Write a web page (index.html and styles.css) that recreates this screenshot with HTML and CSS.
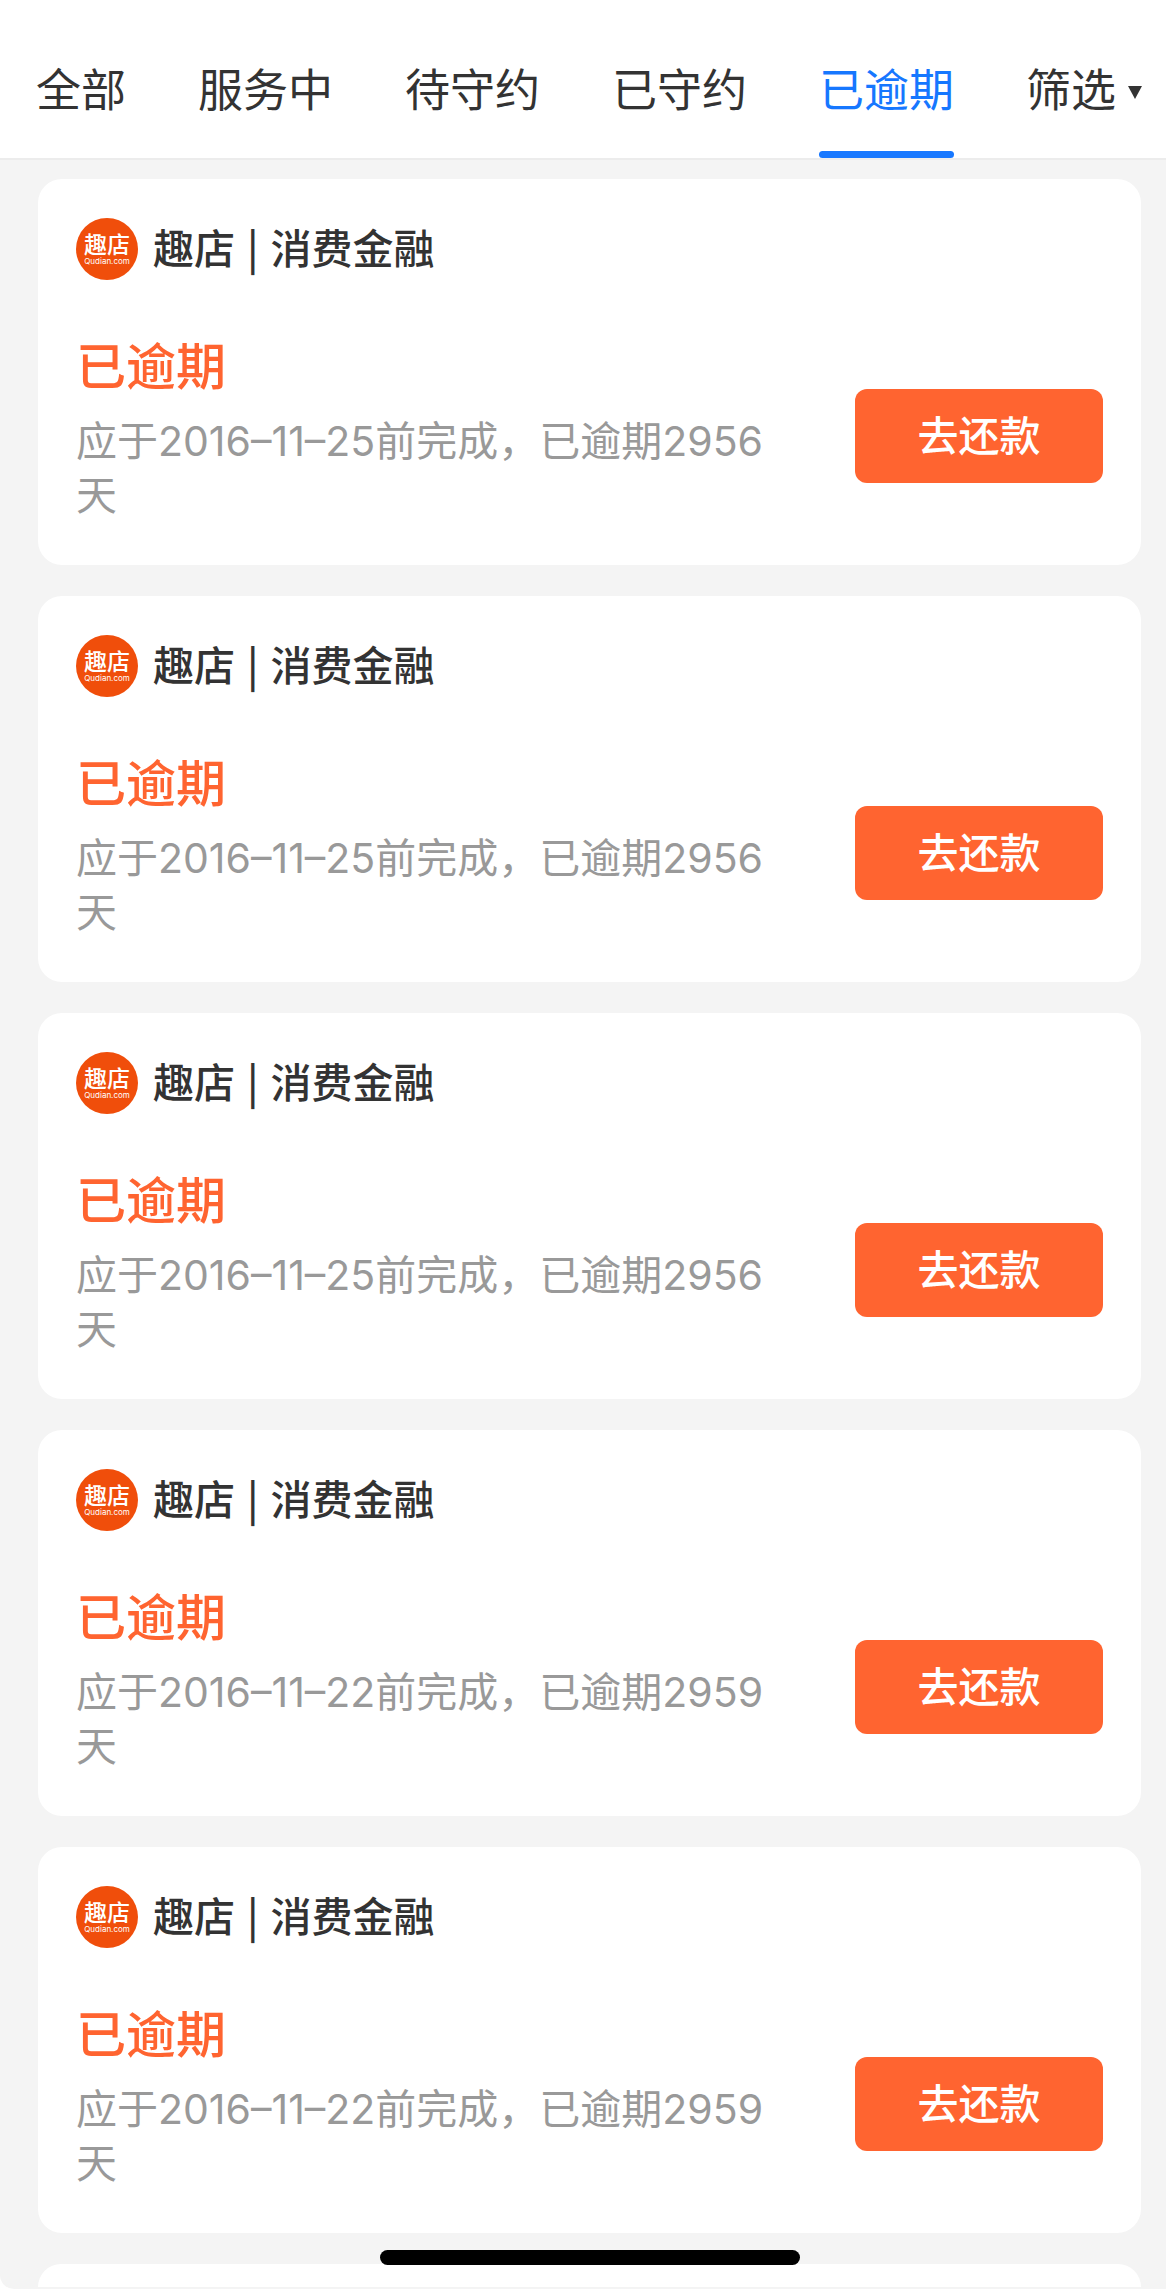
FILE: index.html
```html
<!DOCTYPE html>
<html lang="zh-CN">
<head>
<meta charset="utf-8">
<meta name="viewport" content="width=device-width, initial-scale=1">
<title>已逾期</title>
<link rel="stylesheet" href="styles.css">
</head>
<body>
<div class="app">
  <nav class="tabs">
    <button class="tab" type="button">全部</button>
    <button class="tab" type="button">服务中</button>
    <button class="tab" type="button">待守约</button>
    <button class="tab" type="button">已守约</button>
    <button class="tab tab-active" type="button" aria-current="page">已逾期</button>
    <button class="tab tab-filter" type="button">筛选<svg class="caret" viewBox="0 0 14 13" aria-hidden="true"><path d="M0 0h14L7 13z"/></svg></button>
  </nav>
  <main class="feed">
    <article class="card">
      <header class="card-head">
        <span class="logo"><span class="logo-name">趣店</span><span class="logo-site">Qudian.com</span></span>
        <h2 class="merchant">趣店<span class="bar">|</span>消费金融</h2>
      </header>
      <div class="card-body">
        <div class="info">
          <p class="status">已逾期</p>
          <p class="detail">应于2016–11–25前完成，已逾期2956天</p>
        </div>
        <button class="pay" type="button">去还款</button>
      </div>
    </article>
    <article class="card">
      <header class="card-head">
        <span class="logo"><span class="logo-name">趣店</span><span class="logo-site">Qudian.com</span></span>
        <h2 class="merchant">趣店<span class="bar">|</span>消费金融</h2>
      </header>
      <div class="card-body">
        <div class="info">
          <p class="status">已逾期</p>
          <p class="detail">应于2016–11–25前完成，已逾期2956天</p>
        </div>
        <button class="pay" type="button">去还款</button>
      </div>
    </article>
    <article class="card">
      <header class="card-head">
        <span class="logo"><span class="logo-name">趣店</span><span class="logo-site">Qudian.com</span></span>
        <h2 class="merchant">趣店<span class="bar">|</span>消费金融</h2>
      </header>
      <div class="card-body">
        <div class="info">
          <p class="status">已逾期</p>
          <p class="detail">应于2016–11–25前完成，已逾期2956天</p>
        </div>
        <button class="pay" type="button">去还款</button>
      </div>
    </article>
    <article class="card">
      <header class="card-head">
        <span class="logo"><span class="logo-name">趣店</span><span class="logo-site">Qudian.com</span></span>
        <h2 class="merchant">趣店<span class="bar">|</span>消费金融</h2>
      </header>
      <div class="card-body">
        <div class="info">
          <p class="status">已逾期</p>
          <p class="detail">应于2016–11–22前完成，已逾期2959天</p>
        </div>
        <button class="pay" type="button">去还款</button>
      </div>
    </article>
    <article class="card">
      <header class="card-head">
        <span class="logo"><span class="logo-name">趣店</span><span class="logo-site">Qudian.com</span></span>
        <h2 class="merchant">趣店<span class="bar">|</span>消费金融</h2>
      </header>
      <div class="card-body">
        <div class="info">
          <p class="status">已逾期</p>
          <p class="detail">应于2016–11–22前完成，已逾期2959天</p>
        </div>
        <button class="pay" type="button">去还款</button>
      </div>
    </article>
    <div class="card-next"></div>
  </main>
</div>
<div class="home-indicator"></div>
</body>
</html>
```
FILE: styles.css
```css
* {
  box-sizing: border-box;
}

body {
  margin: 0;
  background: #fff;
  color: #333;
  font-family: "Noto Sans CJK SC", sans-serif;
}

button {
  margin: 0;
  padding: 0;
  border: 0;
  background: none;
  color: inherit;
  font: inherit;
  white-space: nowrap;
  cursor: pointer;
}

.app {
  display: flex;
  flex-direction: column;
  min-height: 100vh;
  overflow: hidden;
  border-bottom-left-radius: 14px;
  background: #f4f4f4;
}

.tabs {
  display: flex;
  justify-content: space-between;
  padding: 55px 24px 0 36px;
  border-bottom: 2px solid #ececec;
  background: #fff;
}

.tab {
  display: flex;
  flex-direction: column;
  height: 103px;
  font-size: 45px;
  line-height: 66px;
}

.tab-active {
  color: #1677ff;
}

.tab-active::after {
  content: "";
  width: 100%;
  height: 7px;
  margin-top: auto;
  border-radius: 4px;
  background: #1677ff;
}

.tab-filter {
  flex-direction: row;
  gap: 12px;
}

.caret {
  width: 14px;
  height: 13px;
  margin-top: 31px;
  fill: #333;
}

.feed {
  display: flex;
  flex: 1;
  flex-direction: column;
  gap: 31px;
  padding: 19px 25px 2px 38px;
}

.card {
  padding: 39px 38px 31px;
  border-radius: 24px;
  background: #fff;
}

.card-next {
  flex: 1;
  min-height: 22px;
  border-radius: 24px 24px 0 0;
  background: #fff;
}

.card-head {
  display: flex;
  align-items: center;
  gap: 15px;
}

.logo {
  display: flex;
  flex-direction: column;
  align-items: center;
  justify-content: center;
  width: 62px;
  height: 62px;
  border-radius: 50%;
  background: #f04e0b;
  color: #fff;
}

.logo-name {
  font-size: 23px;
  font-weight: 500;
  line-height: 24px;
}

.logo-site {
  font-family: Inter, sans-serif;
  font-size: 8px;
  line-height: 12px;
}

.merchant {
  margin: 0;
  padding-bottom: 6px;
  font-size: 41px;
  font-weight: 500;
  line-height: 56px;
}

.bar {
  margin: 0 12px;
}

.card-body {
  display: flex;
  align-items: center;
  justify-content: space-between;
  gap: 40px;
  margin-top: 54px;
}

.info {
  max-width: 700px;
  padding-bottom: 12px;
}

.status {
  margin: 0 0 22px;
  color: #ff6430;
  font-size: 50px;
  font-weight: 500;
  line-height: 58px;
}

.detail {
  margin: 0;
  color: #999;
  font-family: Inter, "Noto Sans CJK SC", sans-serif;
  font-size: 41px;
  font-weight: 400;
  line-height: 54px;
}

.pay {
  flex: none;
  width: 248px;
  height: 94px;
  margin-top: 4px;
  padding-bottom: 6px;
  border-radius: 12px;
  background: #ff6430;
  color: #fff;
  font-size: 41px;
  font-weight: 500;
  line-height: 60px;
}

.home-indicator {
  position: fixed;
  right: 25px;
  bottom: 24px;
  left: 38px;
  width: 420px;
  height: 15px;
  margin: 0 auto;
  border-radius: 8px;
  background: #000;
}
```
